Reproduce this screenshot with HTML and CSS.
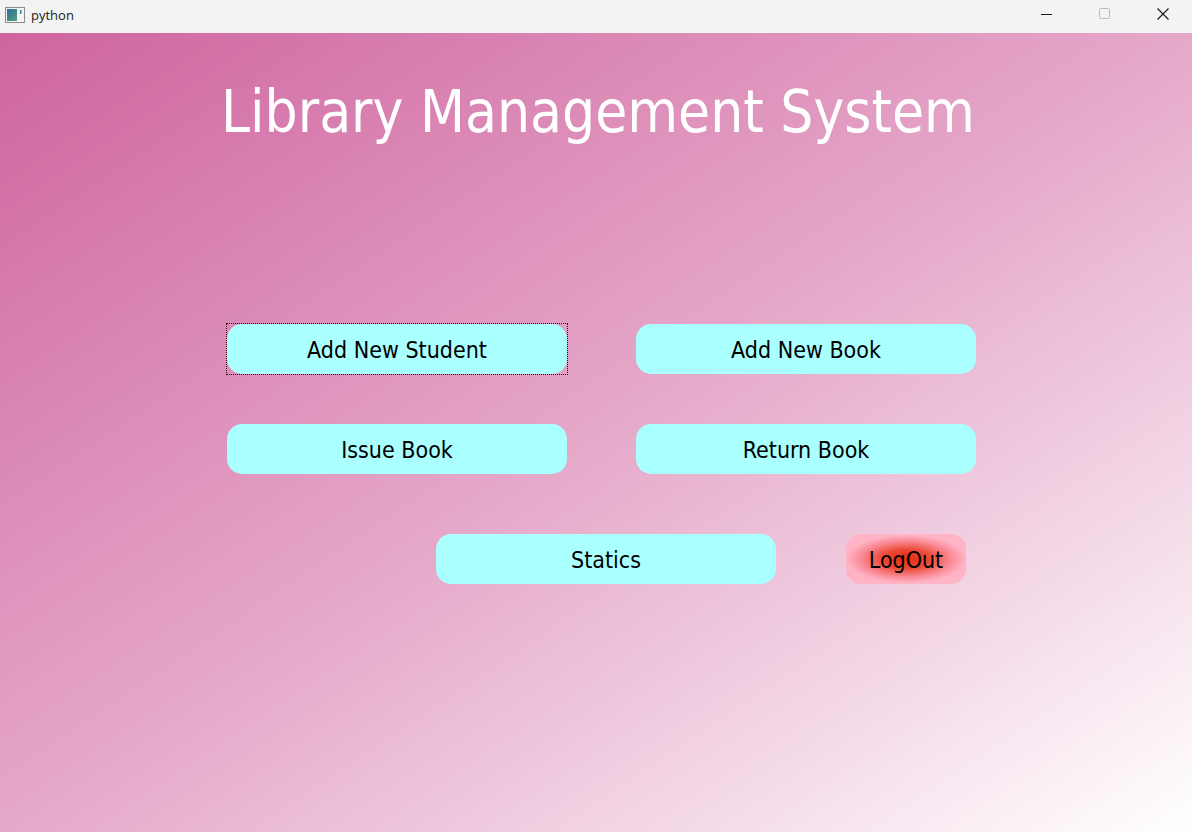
FILE: index.html
```html
<!DOCTYPE html>
<html>
<head>
<meta charset="utf-8">
<title>python</title>
<link rel="stylesheet" href="styles.css">
</head>
<body>
<div class="window">
  <div class="titlebar">
    <div class="app">
      <svg class="app-icon" width="20" height="16" viewBox="0 0 20 16">
        <rect x="0.5" y="0.5" width="19" height="15" fill="#f4f4f4" stroke="#8c8c8c"/>
        <defs><linearGradient id="g" x1="0" y1="0" x2="1" y2="1"><stop offset="0" stop-color="#2c6f9a"/><stop offset="1" stop-color="#4fa07a"/></linearGradient></defs>
        <rect x="2" y="2" width="10" height="12" fill="url(#g)"/>
        <rect x="15" y="3" width="1.5" height="4" fill="#2c8aa0"/>
      </svg>
      <span class="app-name">python</span>
    </div>
    <div class="controls">
      <div class="ctl"><svg width="12" height="12" viewBox="0 0 12 12"><line x1="0" y1="6.5" x2="11" y2="6.5" stroke="#1a1a1a" stroke-width="1"/></svg></div>
      <div class="ctl"><svg width="12" height="12" viewBox="0 0 12 12"><rect x="0.5" y="0.5" width="10" height="10" rx="1" fill="none" stroke="#bdbdbd" stroke-width="1"/></svg></div>
      <div class="ctl"><svg width="12" height="12" viewBox="0 0 12 12"><path d="M0.5 0.5 L11.5 11.5 M11.5 0.5 L0.5 11.5" stroke="#1a1a1a" stroke-width="1.1"/></svg></div>
    </div>
  </div>
  <div class="content">
    <h1 class="heading">Library Management System</h1>
    <div class="grid">
      <button class="btn focused">Add New Student</button>
      <button class="btn">Add New Book</button>
      <button class="btn">Issue Book</button>
      <button class="btn">Return Book</button>
    </div>
    <div class="bottom-row">
      <button class="btn">Statics</button>
      <button class="logout">LogOut</button>
    </div>
  </div>
</div>
</body>
</html>
```

FILE: styles.css
```css
* { box-sizing: border-box; }
html, body { margin: 0; padding: 0; }
body {
  width: 1192px;
  height: 832px;
  overflow: hidden;
  font-family: "DejaVu Sans", "Liberation Sans", sans-serif;
}
.window {
  width: 1192px;
  height: 832px;
  display: flex;
  flex-direction: column;
}
.titlebar {
  height: 33px;
  flex: none;
  background: #f3f3f3;
  display: flex;
  align-items: center;
  justify-content: space-between;
}
.app {
  display: flex;
  align-items: center;
  padding-left: 5px;
  gap: 6px;
  margin-top: -4px;
}
.app-icon { display: block; }
.app-name {
  font-family: "Open Sans", "Liberation Sans", sans-serif;
  font-size: 13px;
  color: #1a1a1a;
}
.controls {
  display: flex;
  height: 100%;
}
.ctl {
  width: 58px;
  display: flex;
  align-items: center;
  justify-content: center;
  margin-top: -6px;
}
.ctl svg { display: block; }
.content {
  flex: 1;
  background: linear-gradient(to bottom right, #cf649f 0%, #e5a8c9 50%, #ffffff 100%);
  display: flex;
  flex-direction: column;
  padding-left: 227px;
}
.heading {
  margin: 39px 0 0 -6px;
  width: 750px;
  text-align: center;
  font-family: "DejaVu Sans", sans-serif;
  font-stretch: condensed;
  font-weight: normal;
  font-size: 58px;
  line-height: 80px;
  color: #ffffff;
  white-space: nowrap;
}
.grid {
  margin-top: 172px;
  display: grid;
  grid-template-columns: 340px 340px;
  column-gap: 69px;
  row-gap: 50px;
}
.btn {
  position: relative;
  height: 50px;
  width: 340px;
  border: none;
  border-radius: 15px;
  background: #aaffff;
  font-family: "DejaVu Sans", sans-serif;
  font-stretch: condensed;
  font-size: 23px;
  color: #000000;
  padding: 0;
  padding-top: 2px;
}
.focused::after {
  content: "";
  position: absolute;
  left: -1px;
  top: -1px;
  right: -1px;
  bottom: -1px;
  border: 1px dotted #3a0010;
}
.bottom-row {
  margin-top: 60px;
  margin-left: 209px;
  display: flex;
  gap: 70px;
}
.logout {
  height: 50px;
  width: 120px;
  border: none;
  border-radius: 15px;
  background: radial-gradient(ellipse 50% 48% at 50% 50%, #e42a10 0%, #ec4a36 40%, #f98a96 75%, #ffb4c6 100%);
  font-family: "DejaVu Sans", sans-serif;
  font-stretch: condensed;
  font-size: 23px;
  color: #000000;
  padding: 0;
  padding-top: 2px;
}
```
